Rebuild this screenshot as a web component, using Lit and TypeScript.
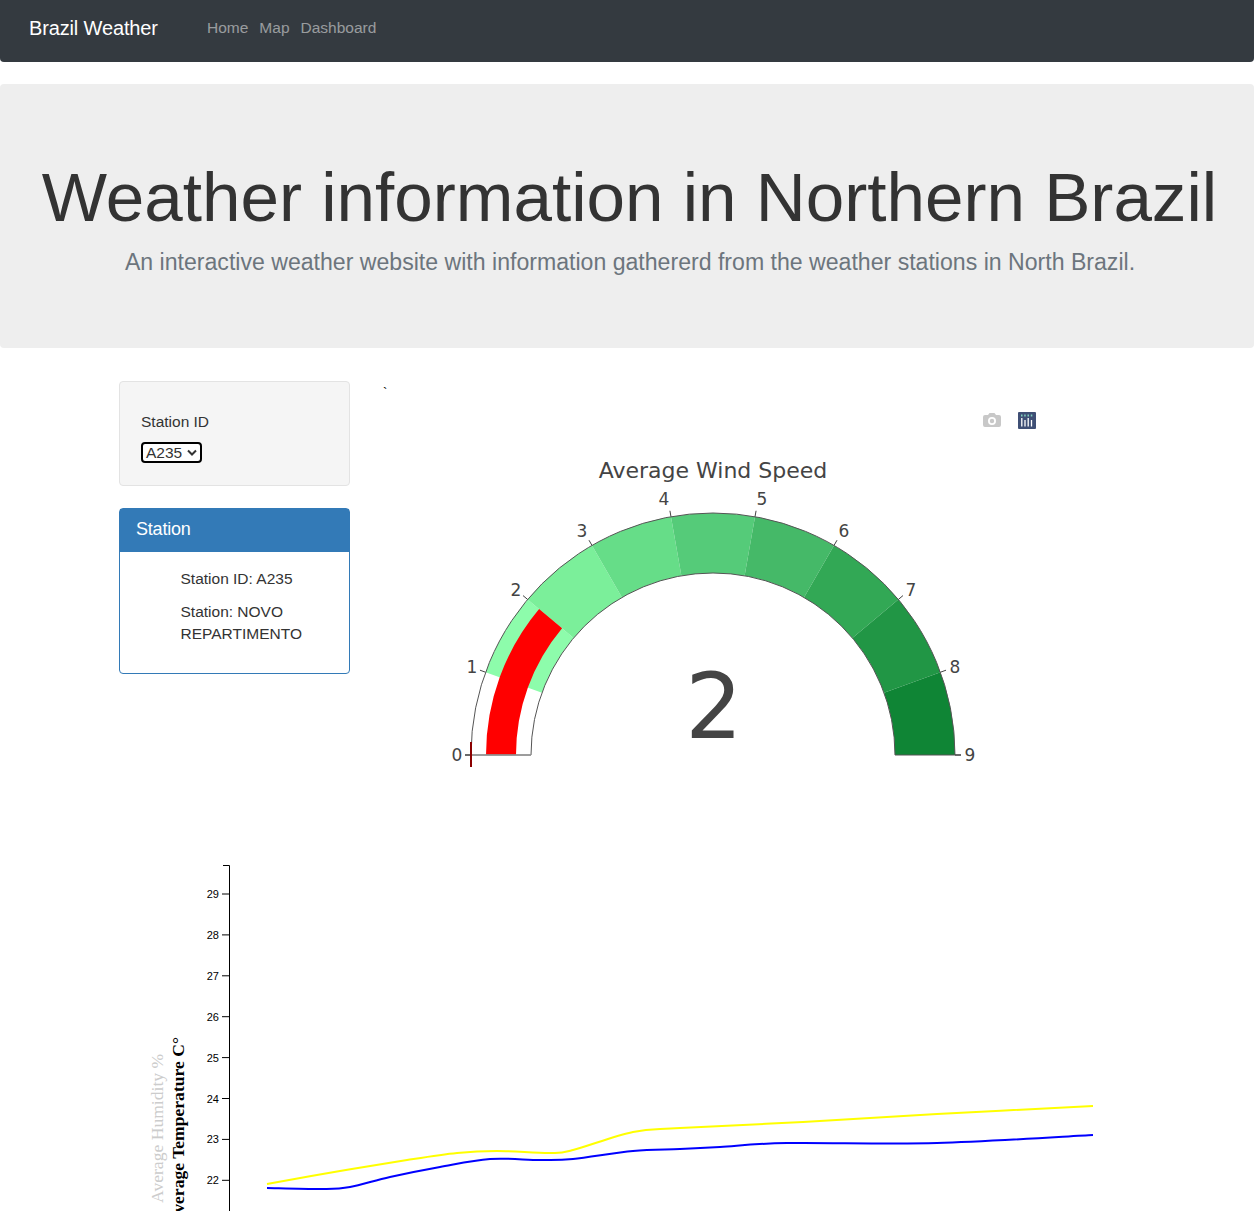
import { LitElement, html, css, svg } from 'lit';
import { customElement } from 'lit/decorators.js';

// gauge geometry, in the coordinates of the plot svg
const CX = 333;
const CY = 355;
const R_OUT = 242;
const R_IN = 182;
const MAX = 9;
const STEP_COLORS = ['#ffffff', '#8dfcab', '#7bef9a', '#66dd88', '#55cb79', '#45b968', '#32a855', '#219645', '#0f8535'];
const TICK_LABELS = [
  [77, 355], [92, 267], [136, 190], [202, 131], [284, 99],
  [382, 99], [464, 131], [531, 190], [575, 267], [590, 355],
];

const pt = (v: number, r: number) => {
  const a = Math.PI * (1 - v / MAX);
  return [CX + r * Math.cos(a), CY - r * Math.sin(a)];
};

const band = (from: number, to: number, r0: number, r1: number) => {
  const [ax, ay] = pt(from, r1);
  const [bx, by] = pt(to, r1);
  const [cx, cy] = pt(to, r0);
  const [dx, dy] = pt(from, r0);
  return `M${ax} ${ay}A${r1} ${r1} 0 0 1 ${bx} ${by}L${cx} ${cy}A${r0} ${r0} 0 0 0 ${dx} ${dy}Z`;
};

// line chart, page coordinates read off the reference
const CHART_X = 120;
const CHART_Y = 865;
const YELLOW = [
  [267, 1184], [340, 1171], [407, 1160], [457, 1153], [497, 1151], [550, 1153], [573, 1150],
  [633, 1132], [680, 1128], [803, 1122], [937, 1114], [1093, 1106],
];
const BLUE = [
  [267, 1188], [323, 1189], [350, 1187], [390, 1177], [440, 1167], [490, 1159], [540, 1160],
  [573, 1159], [633, 1151], [680, 1149], [720, 1147], [787, 1143], [937, 1143], [1093, 1135],
];
const Y_TICKS = [29, 28, 27, 26, 25, 24, 23, 22];

const smooth = (pts: number[][]) => {
  const p = pts.map(([x, y]) => [x - CHART_X, y - CHART_Y]);
  let d = `M${p[0][0]} ${p[0][1]}`;
  for (let i = 0; i < p.length - 1; i++) {
    const a = p[Math.max(i - 1, 0)];
    const b = p[i];
    const c = p[i + 1];
    const e = p[Math.min(i + 2, p.length - 1)];
    d += `C${b[0] + (c[0] - a[0]) / 6} ${b[1] + (c[1] - a[1]) / 6} ${c[0] - (e[0] - b[0]) / 6} ${c[1] - (e[1] - b[1]) / 6} ${c[0]} ${c[1]}`;
  }
  return d;
};

@customElement('app-root')
export class AppRoot extends LitElement {
  static styles = css`
    :host {
      display: block;
      height: 1211px;
      overflow: hidden;
      background: #fff;
      color: #333;
      font-family: 'Liberation Sans', Arial, sans-serif;
      font-size: 15.5px;
    }
    .navbar {
      box-sizing: border-box;
      display: flex;
      align-items: center;
      height: 62px;
      padding: 0 0 6px 29px;
      margin-bottom: 22px;
      background: #343a40;
      border-radius: 0 0 4px 4px;
    }
    .brand {
      width: 178px;
      font-size: 20px;
      letter-spacing: -0.14px;
      color: #fff;
    }
    .nav-links {
      display: flex;
      gap: 11px;
      color: rgba(255, 255, 255, 0.5);
    }
    .jumbotron {
      box-sizing: border-box;
      height: 264px;
      padding-top: 71px;
      margin-bottom: 33px;
      background: #eee;
      border-radius: 4px;
      text-align: center;
    }
    h1 {
      margin: 0;
      padding-left: 5px;
      font-size: 69.2px;
      font-weight: 400;
      line-height: 84px;
      color: #333;
    }
    .lead {
      margin: 7px 0 0;
      padding-left: 6px;
      font-size: 23.1px;
      line-height: 32px;
      color: #6c757d;
    }
    .row {
      display: flex;
      padding-left: 119px;
    }
    .sidebar {
      flex: none;
      width: 231px;
      margin-right: 30px;
    }
    .well {
      box-sizing: border-box;
      height: 105px;
      padding: 30px 21px 0;
      margin-bottom: 22px;
      background: #f5f5f5;
      border: 1px solid #e3e3e3;
      border-radius: 4px;
      line-height: 20px;
    }
    .select {
      box-sizing: border-box;
      display: flex;
      align-items: center;
      justify-content: space-between;
      width: 61px;
      height: 21px;
      margin-top: 10px;
      padding: 0 3px;
      background: #fff;
      border: 2px solid #000;
      border-radius: 4px;
      color: #333;
    }
    .panel {
      box-sizing: border-box;
      height: 166px;
      border: 1px solid #337ab7;
      border-radius: 4px;
    }
    .panel-heading {
      height: 43px;
      padding-left: 16px;
      background: #337ab7;
      color: #fff;
      font-size: 18px;
      letter-spacing: -0.2px;
      line-height: 41px;
    }
    .panel-body {
      padding: 16px 30px 0 60.5px;
      line-height: 22px;
    }
    .panel-body p {
      margin: 0 0 11px;
    }
    .main {
      flex: 1;
      min-width: 0;
    }
    .tick-mark {
      box-sizing: border-box;
      margin: 0;
      height: 19px;
      padding: 5px 0 0 3px;
      font-size: 13px;
      line-height: 13px;
      color: #000;
    }
    .plot {
      display: block;
    }
    .plot text {
      font-family: 'DejaVu Sans', Verdana, sans-serif;
      fill: #444;
    }
    .chart {
      display: block;
      margin: 45px 0 0 120px;
    }
    .chart .tick {
      font-family: 'Liberation Sans', Arial, sans-serif;
      font-size: 11px;
      fill: #000;
    }
    .axis-label {
      font-family: 'Liberation Serif', 'Times New Roman', serif;
      font-size: 17.6px;
    }
  `;

  private gauge() {
    const bars = STEP_COLORS.map(
      (c, i) => svg`<path d=${band(i, i + 1, R_IN, R_OUT)} fill=${c}></path>`,
    );
    const ticks = TICK_LABELS.map(([x, y], i) => {
      const [x0, y0] = pt(i, R_OUT);
      const [x1, y1] = pt(i, R_OUT + 6);
      const w = i === 0 || i === MAX ? 1.6 : 1;
      return svg`
        <line x1=${x0} y1=${y0} x2=${x1} y2=${y1} stroke="#444" stroke-width=${w}></line>
        <text x=${x} y=${y + 6} font-size="17" text-anchor="middle">${i}</text>`;
    });
    return svg`
      ${bars}
      <path d=${band(0, 2, 197, 227)} fill="#ff0000"></path>
      <path d=${band(0, MAX, R_IN, R_OUT)} fill="none" stroke="#555" stroke-width="1"></path>
      <line x1="91" y1="355" x2="151" y2="355" stroke="#999" stroke-width="1.5"></line>
      ${ticks}
      <line x1="91" y1="342" x2="91" y2="367" stroke="#8b0000" stroke-width="2"></line>
      <text x="334" y="338" font-size="90" text-anchor="middle">2</text>
      <text x="333" y="78" font-size="22" text-anchor="middle">Average Wind Speed</text>
    `;
  }

  render() {
    return html`
      <nav class="navbar">
        <div class="brand">Brazil Weather</div>
        <div class="nav-links"><span>Home</span><span>Map</span><span>Dashboard</span></div>
      </nav>
      <header class="jumbotron">
        <h1>Weather information in Northern Brazil</h1>
        <p class="lead">An interactive weather website with information gathererd from the weather stations in North Brazil.</p>
      </header>
      <div class="row">
        <aside class="sidebar">
          <div class="well">
            <div>Station ID</div>
            <div class="select">
              <span>A235</span>
              <svg width="10" height="7" viewBox="0 0 10 7">
                <path d="M1 1.5l4 4 4-4" fill="none" stroke="#333" stroke-width="2"></path>
              </svg>
            </div>
          </div>
          <section class="panel">
            <div class="panel-heading">Station</div>
            <div class="panel-body">
              <p>Station ID: A235</p>
              <p>Station: NOVO REPARTIMENTO</p>
            </div>
          </section>
        </aside>
        <main class="main">
          <p class="tick-mark">\`</p>
          <svg class="plot" width="704" height="420" viewBox="0 0 704 420">
            <g transform="translate(602 13)">
              <path fill="#c8c8c8" d="M3 2h3l1.500-2h5l1.500 2h3a2 2 0 0 1 2 2v8a2 2 0 0 1-2 2H3a2 2 0 0 1-2-2V4a2 2 0 0 1 2-2zM10 4a4 4 0 1 0 0 8a4 4 0 0 0 0-8zm0 1.800a2.200 2.200 0 1 1 0 4.400a2.200 2.200 0 0 1 0-4.400z" fill-rule="evenodd"></path>
            </g>
            <g transform="translate(638 12)">
              <rect width="18" height="17" rx="1" fill="#3f4f75"></rect>
              <path d="M3 3.500h1.500M6.200 3.500h1.500M9.500 3.500h1.500M12.800 3.500h1.500" stroke="#80cfbe" stroke-width="2"></path>
              <path d="M3.800 6v8.500M7 8v6.500M10.200 6v8.500M13.500 8v6.500" stroke="#fff" stroke-width="1.300"></path>
            </g>
            ${this.gauge()}
          </svg>
        </main>
      </div>
      <svg class="chart" width="1000" height="400" viewBox="0 0 1000 400">
        <path d="M103 .5h6.500V400" fill="none" stroke="#000" stroke-width="1"></path>
        ${Y_TICKS.map((t, i) => {
          const y = 29 + i * 40.9;
          return svg`
            <line x1="102" x2="109" y1=${y} y2=${y} stroke="#000" stroke-width="1"></line>
            <text class="tick" x="99" y=${y + 4} text-anchor="end">${t}</text>`;
        })}
        <text class="axis-label" fill="#ccc" transform="translate(43 338) rotate(-90)">Average Humidity %</text>
        <text class="axis-label" fill="#000" font-weight="700" text-anchor="end" transform="translate(64 172) rotate(-90)">Average Temperature C°</text>
        <path d=${smooth(YELLOW)} fill="none" stroke="#ffff00" stroke-width="2"></path>
        <path d=${smooth(BLUE)} fill="none" stroke="#0000ff" stroke-width="2"></path>
      </svg>
    `;
  }
}
